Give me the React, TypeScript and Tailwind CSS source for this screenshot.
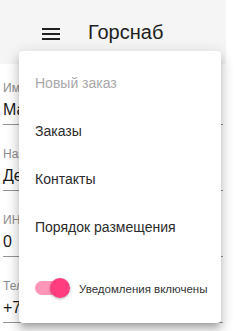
import { useState } from "react";

const fields = [
  { label: "Имя", value: "Максим" },
  { label: "Название", value: "Девелопмент" },
  { label: "ИНН", value: "0" },
  { label: "Телефон", value: "+7 900 000-00-00" },
];

const menuItems = [
  { label: "Новый заказ", disabled: true },
  { label: "Заказы" },
  { label: "Контакты" },
  { label: "Порядок размещения" },
];

function Field({ label, value }: { label: string; value: string }) {
  return (
    <div className="mt-[22px] border-b border-[#949494] pb-[5px] first:mt-[17px]">
      <div className="h-[14px] whitespace-nowrap text-[12px] leading-[14px] text-[#8e8e8e]">
        {label}
      </div>
      <div className="mt-[5px] h-[19px] whitespace-nowrap text-[16px] leading-[19px] text-[#1a1a1a]">
        {value}
      </div>
    </div>
  );
}

function Toggle({ on }: { on: boolean }) {
  return (
    <span className="relative inline-flex h-[20px] w-[36px] flex-shrink-0 items-center">
      <span
        className={`h-[14px] w-[34px] rounded-full ${on ? "bg-[#ff95b9]" : "bg-[#b0b0b0]"}`}
      />
      <span
        className={`absolute top-0 h-[20px] w-[20px] rounded-full shadow-[0_1px_3px_rgba(0,0,0,0.3)] ${
          on ? "left-[15px] bg-[#ff3d7f]" : "left-[-3px] bg-[#fafafa]"
        }`}
      />
    </span>
  );
}

export default function App() {
  const [notify, setNotify] = useState(true);
  return (
    <div className="relative h-[331px] w-[250px] overflow-hidden bg-white font-['Liberation_Sans',Arial,sans-serif]">
      <div className="w-[226px]">
        <header className="flex h-[64px] items-center bg-[#f5f5f5] pl-[42px]">
          <svg width="18" height="12" viewBox="0 0 18 12" className="mt-[3px]">
            <rect y="0" width="18" height="2" fill="#212121" />
            <rect y="5" width="18" height="2" fill="#212121" />
            <rect y="10" width="18" height="2" fill="#212121" />
          </svg>
          <h1 className="ml-[28px] text-[20px] leading-none text-[#212121]">Горснаб</h1>
        </header>
        <form className="px-[3px]">
          {fields.map((f) => (
            <Field key={f.label} {...f} />
          ))}
        </form>
      </div>

      {/* open menu */}
      <div className="absolute left-[19px] top-[51px] h-[272px] w-[202px] rounded-[4px] bg-white py-2 shadow-[0_5px_5px_-3px_rgba(0,0,0,0.2),0_8px_10px_1px_rgba(0,0,0,0.14),0_3px_14px_2px_rgba(0,0,0,0.12)]">
        <ul>
          {menuItems.map((item) => (
            <li
              key={item.label}
              className={`flex h-12 items-center px-4 text-[14px] ${
                item.disabled ? "text-[#a8a8a8]" : "text-[#2b2b2b]"
              }`}
            >
              {item.label}
            </li>
          ))}
        </ul>
        <label className="mt-[15px] flex h-12 cursor-pointer items-center pl-4">
          <span onClick={() => setNotify(!notify)}>
            <Toggle on={notify} />
          </span>
          <span className="ml-[8px] text-[11.5px] text-[#333]">Уведомления включены</span>
        </label>
      </div>
    </div>
  );
}
